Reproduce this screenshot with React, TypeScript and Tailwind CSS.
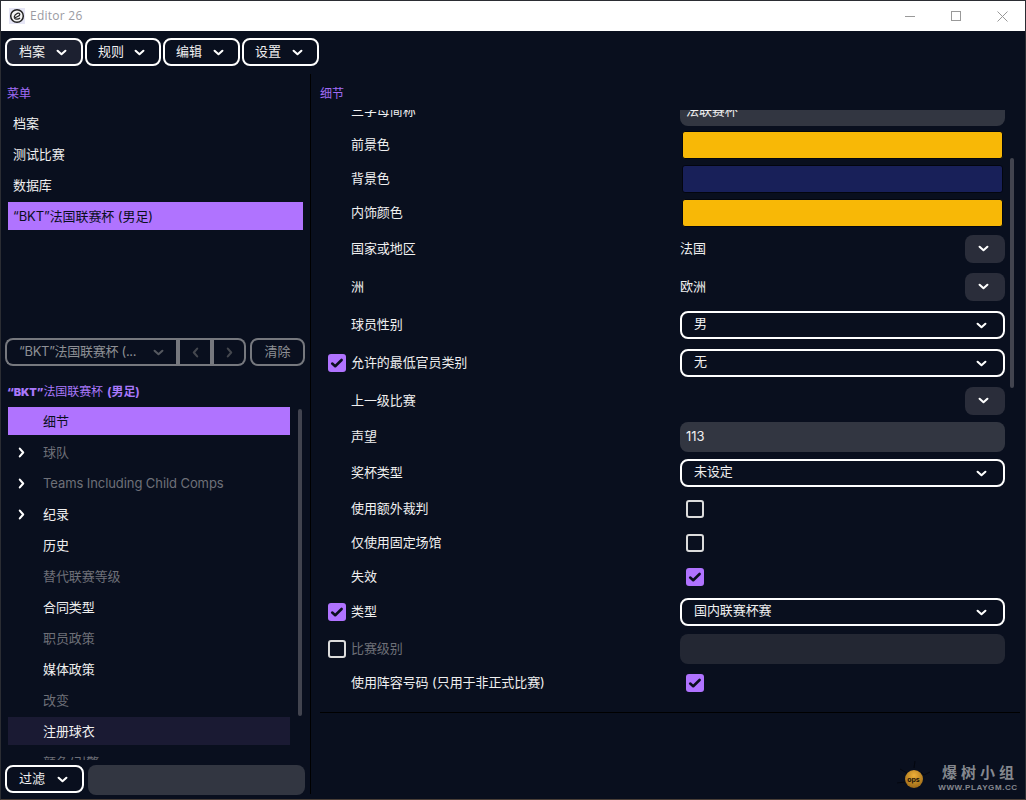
import React from "react";

const FONT = "font-['Inter','Noto_Sans_CJK_SC',sans-serif] tracking-[-0.08px]";

function Chev({ className = "", dir = "down" }: { className?: string; dir?: "down" | "left" | "right" }) {
  const d = dir === "down" ? "M2.6 4.8 L6.5 8.2 L10.4 4.8" : dir === "right" ? "M4.8 2.6 L8.2 6.5 L4.8 10.4" : "M8.2 2.6 L4.8 6.5 L8.2 10.4";
  return (
    <svg width="13" height="13" viewBox="0 0 13 13" fill="none" className={className}>
      <path d={d} stroke="currentColor" strokeWidth="2.1" strokeLinecap="round" strokeLinejoin="round" />
    </svg>
  );
}

function Check({ on }: { on: boolean }) {
  if (on)
    return (
      <div className="w-[18px] h-[18px] rounded-[3px] bg-[#b073ff] flex items-center justify-center">
        <svg width="14" height="14" viewBox="0 0 14 14" fill="none">
          <path d="M2.2 7.6 L5.2 10.2 L11.6 4" stroke="#0a0f1e" strokeWidth="2.6" strokeLinecap="round" strokeLinejoin="round" />
        </svg>
      </div>
    );
  return <div className="w-[18px] h-[18px] rounded-[3px] border-2 border-[#dcdcdc] bg-[#0a101f]" />;
}

function MenuBtn({ label, w, active }: { label: string; w: string; active?: boolean }) {
  return (
    <div className={`${w} h-[28px] shrink-0 rounded-[8px] border-2 border-[#fff] flex items-center justify-between ${active ? "pl-[12px] bg-[#1c2030]" : "pl-[11px]"} pr-[13px] text-[13px] text-[#f0f0f0]`}>
      <span className="-mt-[1px]">{label}</span>
      <Chev className="text-white" />
    </div>
  );
}

function Combo({ label }: { label: string }) {
  return (
    <div className="w-[325px] h-[28px] rounded-[8px] border-2 border-white flex items-center justify-between pl-[12px] pr-[15px] text-[13px] text-[#f0f0f0]">
      <span className="-mt-[2px]">{label}</span>
      <Chev className="text-white" />
    </div>
  );
}

function Drop({ label }: { label?: string }) {
  return (
    <div className="w-[325px] flex items-center justify-between text-[13px] text-[#f0f0f0]">
      <span>{label}</span>
      <div className="w-[40px] h-[28px] rounded-[8px] bg-[#2a2d3a] flex items-center justify-center">
        <Chev className="text-white -ml-[4px] -mt-[2px]" />
      </div>
    </div>
  );
}

function Swatch({ color }: { color: string }) {
  return (
    <div className="w-[325px] flex justify-center -mt-[1px]">
      <div className={`w-[321px] h-[28px] rounded-[3px] border border-[#03060f] ${color}`} />
    </div>
  );
}

function Input({ value, disabled }: { value?: string; disabled?: boolean }) {
  return (
    <div className={`w-[325px] h-[30px] rounded-[8px] flex items-center px-[6px] text-[13px] text-[#f0f0f0] ${disabled ? "bg-[#232733]" : "bg-[#323641]"}`}>
      {value}
    </div>
  );
}

function Row({ h, label, check, dim, children }: { h: string; label: string; check?: boolean; dim?: boolean; children: React.ReactNode }) {
  return (
    <div className={`${h} flex items-center`}>
      <div className="w-[29px] flex justify-center pl-[7px] ml-[-1px]">
        {check !== undefined && <Check on={check} />}
      </div>
      <div className={`w-[332px] pl-[3px] text-[13px] ${dim ? "text-[#6e7078]" : "text-[#f0f0f0]"}`}>{label}</div>
      {children}
    </div>
  );
}

function TreeRow({ label, dim, arrow, selected, hover }: { label: string; dim?: boolean; arrow?: boolean; selected?: boolean; hover?: boolean }) {
  return (
    <div className={`h-[28px] mb-[3px] flex items-center text-[13px] ${selected ? "bg-[#b073ff] text-[#0a0f1e]" : hover ? "bg-[#1a1a33] text-[#f0f0f0]" : dim ? "text-[#6e7078]" : "text-[#f0f0f0]"}`}>
      <div className="w-[35px] flex justify-start pl-[7px]">
        {arrow && <Chev dir="right" className="text-white" />}
      </div>
      <span className="pt-[2px]">{label}</span>
    </div>
  );
}

export default function App() {
  return (
    <div className={`${FONT} relative w-[1026px] h-[800px] overflow-hidden bg-[#090f1e] border-t border-l border-r border-[#2b2d33] border-b-[#4a3f38] border-b flex flex-col`}>
      {/* Title bar */}
      <div className="h-[30px] shrink-0 bg-white flex items-center justify-between">
        <div className="flex items-center pl-[8px]">
          <svg width="16" height="16" viewBox="0 0 16 16" fill="none">
            <rect width="16" height="16" fill="#e6e6f6" />
            <circle cx="8" cy="8" r="6.3" fill="#f4f4f4" stroke="#222" strokeWidth="1.5" />
            <path d="M5 9.5 C6 5 11 4 10.8 6.6 C10.6 8.6 6.8 8.6 5.6 10.2 C6.4 11.6 9.4 11.4 11 10" stroke="#222" strokeWidth="1.2" />
          </svg>
          <span className="ml-[5px] text-[12px] tracking-[0.25px] text-[#9a9aa2] font-['Open_Sans',sans-serif]">Editor 26</span>
        </div>
        <div className="flex items-center">
          <div className="w-[46px] flex justify-center">
            <div className="w-[10px] h-px bg-[#999]" />
          </div>
          <div className="w-[46px] flex justify-center">
            <div className="w-[10px] h-[10px] border border-[#999]" />
          </div>
          <div className="w-[46px] flex justify-center">
            <svg width="11" height="11" viewBox="0 0 11 11"><path d="M0.5 0.5 L10.5 10.5 M10.5 0.5 L0.5 10.5" stroke="#999" fill="none" /></svg>
          </div>
        </div>
      </div>

      {/* Menu bar */}
      <div className="h-[43px] shrink-0 flex items-start gap-[2px] pl-[4px] pt-[7px]">
        <MenuBtn label="档案" w="w-[78px]" active />
        <MenuBtn label="规则" w="w-[76px]" />
        <MenuBtn label="编辑" w="w-[77px]" />
        <MenuBtn label="设置" w="w-[77px]" />
      </div>

      {/* Body */}
      <div className="flex flex-1 min-h-0">
        {/* Left */}
        <div className="w-[309px] shrink-0 flex flex-col pb-[4px]">
          <div className="h-[30px] pl-[6px] flex items-end text-[12px] text-[#a06cf5] pb-[1px] shrink-0">菜单</div>
          <div className="shrink-0 pl-[7px] pr-[7px] pt-[5px] h-[218px]">
            {["档案", "测试比赛", "数据库"].map((t) => (
              <div key={t} className="h-[28px] mb-[3px] flex items-center pl-[5px] pt-[2px] text-[13px] text-[#f0f0f0]">{t}</div>
            ))}
            <div className="h-[28px] flex items-center pl-[5px] pt-[2px] text-[13px] text-[#0a0f1e] bg-[#b073ff]">“BKT”法国联赛杯 (男足)</div>
          </div>
          {/* Filter row */}
          <div className="h-[28px] shrink-0 flex pl-[4px] mt-[16px] text-[13px] text-[#8d8f95]">
            <div className="w-[171px] h-[28px] rounded-l-[8px] border-2 border-r-0 border-[#76787e] flex items-center justify-between pl-[12px] pr-[11px]">
              <span className="whitespace-nowrap tracking-[-0.3px]">“BKT”法国联赛杯 (...</span>
              <Chev className="text-[#55585f] shrink-0" />
            </div>
            <div className="w-[4px] h-[28px] bg-[#76787e]" />
            <div className="w-[30px] h-[28px] border-y-2 border-[#76787e] flex items-center justify-center">
              <Chev dir="left" className="text-[#44474e]" />
            </div>
            <div className="w-[4px] h-[28px] bg-[#76787e]" />
            <div className="w-[32px] h-[28px] rounded-r-[8px] border-2 border-l-0 border-[#76787e] flex items-center justify-center">
              <Chev dir="right" className="text-[#44474e]" />
            </div>
            <div className="w-[55px] ml-[4px] h-[28px] rounded-[8px] border-2 border-[#76787e] flex items-center justify-center">清除</div>
          </div>
          {/* Tree title */}
          <div className="h-[28px] shrink-0 mt-[12px] pl-[6px] flex items-center text-[12px] text-[#a878fa]">
            <span className="font-black text-[11px]">“BKT”</span>
            <span>法国联赛杯</span>
            <span className="font-bold ml-[4px]">(男足)</span>
          </div>
          {/* Tree */}
          <div className="flex flex-1 min-h-0 mt-[1px]">
            <div className="w-[282px] ml-[7px] overflow-hidden">
              <TreeRow label="细节" selected />
              <TreeRow label="球队" dim arrow />
              <TreeRow label="Teams Including Child Comps" dim arrow />
              <TreeRow label="纪录" arrow />
              <TreeRow label="历史" />
              <TreeRow label="替代联赛等级" dim />
              <TreeRow label="合同类型" />
              <TreeRow label="职员政策" dim />
              <TreeRow label="媒体政策" />
              <TreeRow label="改变" dim />
              <TreeRow label="注册球衣" hover />
              <TreeRow label="颜色/引擎" dim />
            </div>
            <div className="w-[4px] h-[307px] ml-[8px] mt-[2px] rounded-full bg-[#42444f]" />
          </div>
          {/* Filter */}
          <div className="h-[30px] shrink-0 flex pl-[4px] gap-[4px] mt-[5px]">
            <div className="w-[79px] h-[28px] rounded-[8px] border-2 border-white flex items-center justify-between pl-[12px] pr-[13px] text-[13px] text-[#f0f0f0]">
              <span className="-mt-[1px]">过滤</span>
              <Chev className="text-white" />
            </div>
            <div className="w-[217px] h-[30px] rounded-[8px] bg-[#323641]" />
          </div>
        </div>

        {/* Right */}
        <div className="flex-1 min-w-0 border-l border-black flex flex-col pl-[9px] mb-[5px]">
          <div className="h-[36px] shrink-0 text-[12px] text-[#a06cf5] flex items-end pb-[7px]">细节</div>
          <div className="flex h-[603px] shrink-0 border-b border-black w-[700px]">
            <div className="w-[690px] h-[602px] overflow-hidden">
              <div className="-mt-[16px]">
                <Row h="h-[34px]" label="三字母简称"><Input value="法联赛杯" /></Row>
                <Row h="h-[34px]" label="前景色"><Swatch color="bg-[#f8b806]" /></Row>
                <Row h="h-[34px]" label="背景色"><Swatch color="bg-[#182059]" /></Row>
                <Row h="h-[34px]" label="内饰颜色"><Swatch color="bg-[#f8b806]" /></Row>
                <Row h="h-[38px]" label="国家或地区"><Drop label="法国" /></Row>
                <Row h="h-[38px]" label="洲"><Drop label="欧洲" /></Row>
                <Row h="h-[38px]" label="球员性别"><Combo label="男" /></Row>
                <Row h="h-[38px]" label="允许的最低官员类别" check><Combo label="无" /></Row>
                <Row h="h-[38px]" label="上一级比赛"><Drop /></Row>
                <Row h="h-[34px]" label="声望"><Input value="113" /></Row>
                <Row h="h-[38px]" label="奖杯类型"><Combo label="未设定" /></Row>
                <Row h="h-[34px]" label="使用额外裁判"><div className="pl-[6px]"><Check on={false} /></div></Row>
                <Row h="h-[34px]" label="仅使用固定场馆"><div className="pl-[6px]"><Check on={false} /></div></Row>
                <Row h="h-[34px]" label="失效"><div className="pl-[6px]"><Check on /></div></Row>
                <Row h="h-[36px]" label="类型" check><Combo label="国内联赛杯赛" /></Row>
                <Row h="h-[38px]" label="比赛级别" check={false} dim><Input disabled /></Row>
                <Row h="h-[30px]" label="使用阵容号码 (只用于非正式比赛)"><div className="pl-[6px]"><Check on /></div></Row>
              </div>
            </div>
          </div>
        </div>
      </div>

      {/* Scrollbar over the detail panel */}
      <div className="absolute left-[1009px] top-[157px] w-[4px] h-[230px] rounded-full bg-[#42444f]" />

      {/* Watermark */}
      <svg className="absolute left-[893px] top-[757px]" width="40" height="36" viewBox="0 0 40 36" fill="none">
        <path d="M21 3 L20 10 M6 11 L13 15 M3 25 L11 24 M36 14 L30 17 L27 14" stroke="#03060f" strokeWidth="1" />
      </svg>
      <div className="absolute left-[904px] top-[769px] w-[18px] h-[18px] rounded-full bg-[radial-gradient(circle_at_50%_30%,#eeb038,#8a5a10)] flex items-center justify-center overflow-hidden">
        <span className="text-[7px] font-bold text-[#1a1208] mt-[2px] -ml-[1px]">ops</span>
      </div>
      <div className="absolute left-[937px] top-[763px] flex flex-col items-center text-[#85888f]">
        <span className="text-[15px] leading-[18px] font-bold tracking-[4px] pl-[4px] font-['Liberation_Serif','Noto_Sans_CJK_SC',serif]">爆树小组</span>
        <span className="text-[8px] leading-[10px] mt-[1px] font-bold tracking-[0.6px] font-['Liberation_Sans',sans-serif]">WWW.PLAYGM.CC</span>
      </div>
    </div>
  );
}
